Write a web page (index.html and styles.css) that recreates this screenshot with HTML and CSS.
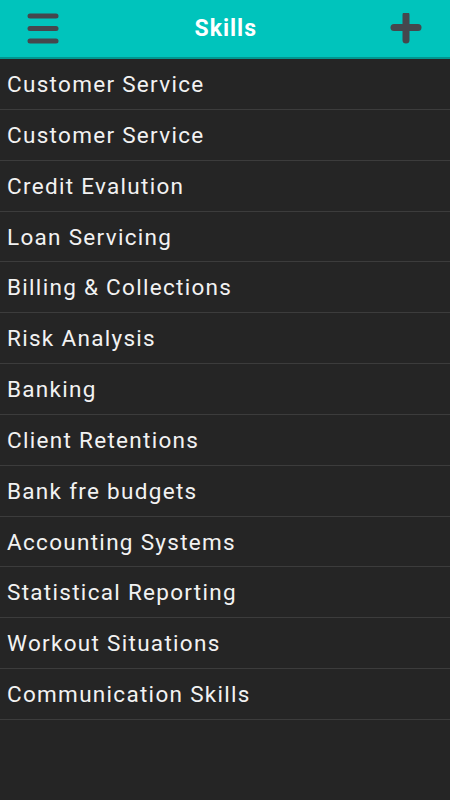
FILE: index.html
```html
<!DOCTYPE html>
<html lang="en">
<head>
    <meta charset="UTF-8">
    <meta name="viewport" content="width=device-width, initial-scale=1.0">
    <title>Skills</title>
    <link rel="stylesheet" href="styles.css">
</head>

<body>

    <!-- Top bar -->
    <div class="top-bar">
        <button class="icon-button">
            <svg width="32" height="32" viewBox="0 0 32 32">
                <g stroke="#45474d" stroke-width="5" stroke-linecap="round">
                    <line x1="3" y1="3" x2="29" y2="3"/>
                    <line x1="3" y1="15.5" x2="29" y2="15.5"/>
                    <line x1="3" y1="28" x2="29" y2="28"/>
                </g>
            </svg>
        </button>
        <h1>Skills</h1>
        <button class="icon-button">
            <svg width="32" height="32" viewBox="0 0 32 32">
                <g stroke="#45474d" stroke-width="7" stroke-linecap="round">
                    <line x1="16" y1="2" x2="16" y2="27"/>
                    <line x1="4" y1="14.5" x2="28" y2="14.5"/>
                </g>
            </svg>
        </button>
    </div>

    <!-- Skill list -->
    <ul class="skill-list">
        <li>Customer Service</li>
        <li>Customer Service</li>
        <li>Credit Evalution</li>
        <li>Loan Servicing</li>
        <li>Billing &amp; Collections</li>
        <li>Risk Analysis</li>
        <li>Banking</li>
        <li>Client Retentions</li>
        <li>Bank fre budgets</li>
        <li>Accounting Systems</li>
        <li>Statistical Reporting</li>
        <li>Workout Situations</li>
        <li>Communication Skills</li>
    </ul>

</body>
</html>
```

FILE: styles.css
```css
body {
    font-family: Roboto, "Noto Sans", sans-serif;
    background: #252525;
    margin: 0;
    padding: 0;
    height: 800px;
    overflow: hidden;
}

/* Top bar */
.top-bar {
    height: 57px;
    background: #00c4bc;
    border-bottom: 2px solid #00968f;
    display: flex;
    align-items: center;
    justify-content: space-between;
    padding: 0 28.5px 0 27px;
}

.top-bar h1 {
    margin: 0 0 0 3px;
    color: white;
    font-size: 23px;
    font-weight: bold;
    letter-spacing: 1px;
}

.icon-button {
    background: none;
    border: none;
    padding: 0;
    width: 32px;
    height: 32px;
    display: flex;
    cursor: pointer;
}

/* List */
.skill-list {
    list-style: none;
    margin: 0;
    padding: 0;
}

.skill-list li {
    height: 49.85px;
    line-height: 50px;
    padding-left: 7px;
    color: #f2f2f2;
    font-size: 22.5px;
    letter-spacing: 1.3px;
    border-bottom: 1px solid #3c3c3c;
}
```
